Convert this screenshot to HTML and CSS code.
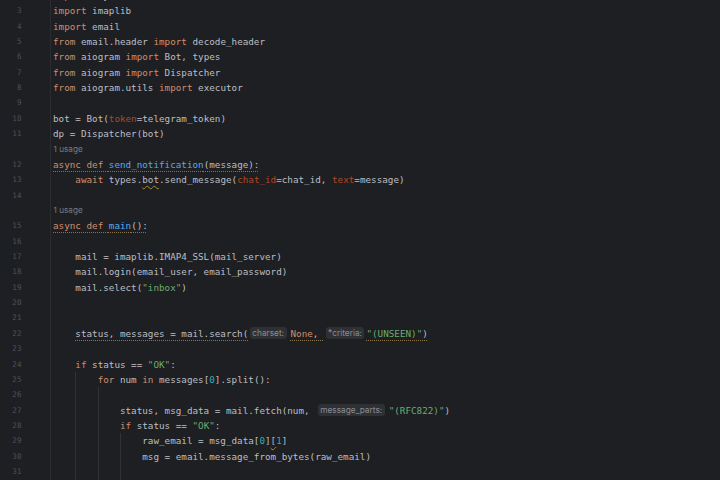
FILE: index.html
```html
<!DOCTYPE html>
<html lang="en">
<head>
<meta charset="utf-8">
<title>main.py</title>
<link rel="stylesheet" href="styles.css">
</head>
<body>
<div class="editor">
  <div class="row"><span class="ln">2</span><span class="code"><span class="k">import</span> asyncio</span></div>
  <div class="row"><span class="ln">3</span><span class="code"><span class="k">import</span> imaplib</span></div>
  <div class="row"><span class="ln">4</span><span class="code"><span class="k">import</span> email</span></div>
  <div class="row"><span class="ln">5</span><span class="code"><span class="k">from</span> email.header <span class="k">import</span> decode_header</span></div>
  <div class="row"><span class="ln">6</span><span class="code"><span class="k">from</span> aiogram <span class="k">import</span> Bot, types</span></div>
  <div class="row"><span class="ln">7</span><span class="code"><span class="k">from</span> aiogram <span class="k">import</span> Dispatcher</span></div>
  <div class="row"><span class="ln">8</span><span class="code"><span class="k">from</span> aiogram.utils <span class="k">import</span> executor</span></div>
  <div class="row"><span class="ln">9</span><span class="code"></span></div>
  <div class="row"><span class="ln">10</span><span class="code">bot = Bot(<span class="p">token</span>=telegram_token)</span></div>
  <div class="row"><span class="ln">11</span><span class="code">dp = Dispatcher(bot)</span></div>
  <div class="row"><span class="ln"></span><span class="code cv">1 usage</span></div>
  <div class="row"><span class="ln">12</span><span class="code"><span class="w"><span class="k">async def</span> <span class="f">send_notification</span>(message):</span></span></div>
  <div class="row"><span class="ln">13</span><span class="code"><span class="t"></span><span class="k">await</span> types.<span class="ww">bot</span>.send_message(<span class="p">chat_id</span>=chat_id, <span class="p">text</span>=message)</span></div>
  <div class="row"><span class="ln">14</span><span class="code"></span></div>
  <div class="row"><span class="ln"></span><span class="code cv">1 usage</span></div>
  <div class="row"><span class="ln">15</span><span class="code"><span class="w"><span class="k">async def</span> <span class="f">main</span>():</span></span></div>
  <div class="row"><span class="ln">16</span><span class="code"></span></div>
  <div class="row"><span class="ln">17</span><span class="code"><span class="t"></span>mail = imaplib.IMAP4_SSL(mail_server)</span></div>
  <div class="row"><span class="ln">18</span><span class="code"><span class="t"></span>mail.login(email_user, email_password)</span></div>
  <div class="row"><span class="ln">19</span><span class="code"><span class="t"></span>mail.select(<span class="s">"inbox"</span>)</span></div>
  <div class="row"><span class="ln">20</span><span class="code"></span></div>
  <div class="row"><span class="ln">21</span><span class="code"></span></div>
  <div class="row"><span class="ln">22</span><span class="code"><span class="t"></span><span class="w">status, messages = mail.search(</span><span class="h h-l">charset:</span><span class="w"><span class="k">None</span>, </span><span class="h">*criteria:</span><span class="w"><span class="s">"(UNSEEN)"</span>)</span></span></div>
  <div class="row"><span class="ln">23</span><span class="code"></span></div>
  <div class="row"><span class="ln">24</span><span class="code"><span class="t"></span><span class="k">if</span> status == <span class="s">"OK"</span>:</span></div>
  <div class="row"><span class="ln">25</span><span class="code"><span class="t"></span><span class="t g"></span><span class="k">for</span> num <span class="k">in</span> messages[<span class="n">0</span>].split():</span></div>
  <div class="row"><span class="ln">26</span><span class="code"><span class="t"></span><span class="t g"></span><span class="t g"></span></span></div>
  <div class="row"><span class="ln">27</span><span class="code"><span class="t"></span><span class="t g"></span><span class="t g"></span>status, msg_data = mail.fetch(num, <span class="h h-r">message_parts:</span><span class="s">"(RFC822)"</span>)</span></div>
  <div class="row"><span class="ln">28</span><span class="code"><span class="t"></span><span class="t g"></span><span class="t g"></span><span class="k">if</span> status == <span class="s">"OK"</span>:</span></div>
  <div class="row"><span class="ln">29</span><span class="code"><span class="t"></span><span class="t g"></span><span class="t g"></span><span class="t g"></span>raw_email = msg_data[<span class="n">0</span>]<span class="ww">[</span><span class="n">1</span>]</span></div>
  <div class="row"><span class="ln">30</span><span class="code"><span class="t"></span><span class="t g"></span><span class="t g"></span><span class="t g"></span>msg = email.message_from_bytes(raw_email)</span></div>
  <div class="row"><span class="ln">31</span><span class="code"><span class="t"></span><span class="t g"></span><span class="t g"></span><span class="t g"></span></span></div>
  <div class="row"><span class="ln">32</span><span class="code"><span class="t"></span><span class="t g"></span><span class="t g"></span><span class="t g"></span>print(msg)</span></div>
</div>
</body>
</html>
```

FILE: styles.css
```css
html, body {
  margin: 0;
  padding: 0;
  height: 100%;
  background: #1e1f22;
  overflow: hidden;
}

.editor {
  margin-top: -12.1px;
  font-family: "DejaVu Sans Mono", "Liberation Mono", monospace;
  font-size: 9.27px;
  color: #bcbec4;
}

.row {
  display: flex;
  height: 15.36px;
  line-height: 15.36px;
  white-space: pre;
}

.ln {
  flex: none;
  width: 51px;
  box-sizing: border-box;
  padding-right: 28.5px;
  border-right: 1px solid #2a2c30;
  text-align: right;
  color: #4b5059;
  font-size: 7.6px;
}

.code {
  flex: 1;
  padding-left: 2px;
  display: flex;
  align-items: center;
  height: 15.36px;
}

.t {
  display: inline-block;
  flex: none;
  width: 4ch;
  height: 15.36px;
  box-sizing: border-box;
}

.g {
  border-left: 1px solid #303236;
}

.k { color: #cf8e6d; }
.f { color: #56a8f5; }
.s { color: #6aab73; }
.n { color: #2aacb8; }
.p { color: #aa4926; }

.w {
  text-decoration: underline dotted #8a7448;
  text-decoration-thickness: 1px;
  text-underline-offset: 2.5px;
  text-decoration-skip-ink: none;
}

.ww {
  text-decoration: underline wavy #a88c3a;
  text-decoration-thickness: 1px;
  text-underline-offset: 2px;
  text-decoration-skip-ink: none;
}

.cv {
  font-family: Inter, "Noto Sans", sans-serif;
  font-size: 8.2px;
  color: #7a7e85;
  padding-left: 2.5px;
}

.h {
  display: inline-block;
  font-family: Inter, "Noto Sans", sans-serif;
  font-size: 8.3px;
  line-height: 12px;
  height: 12px;
  color: #8b8e94;
  background: #2e3034;
  border-radius: 3px;
  padding: 0 2.5px;
  margin: 0 2px 0 1.5px;
}

.h-l { margin: 0 4px 0 1.5px; }
.h-r { margin: 0 4px 0 2.5px; }
```
